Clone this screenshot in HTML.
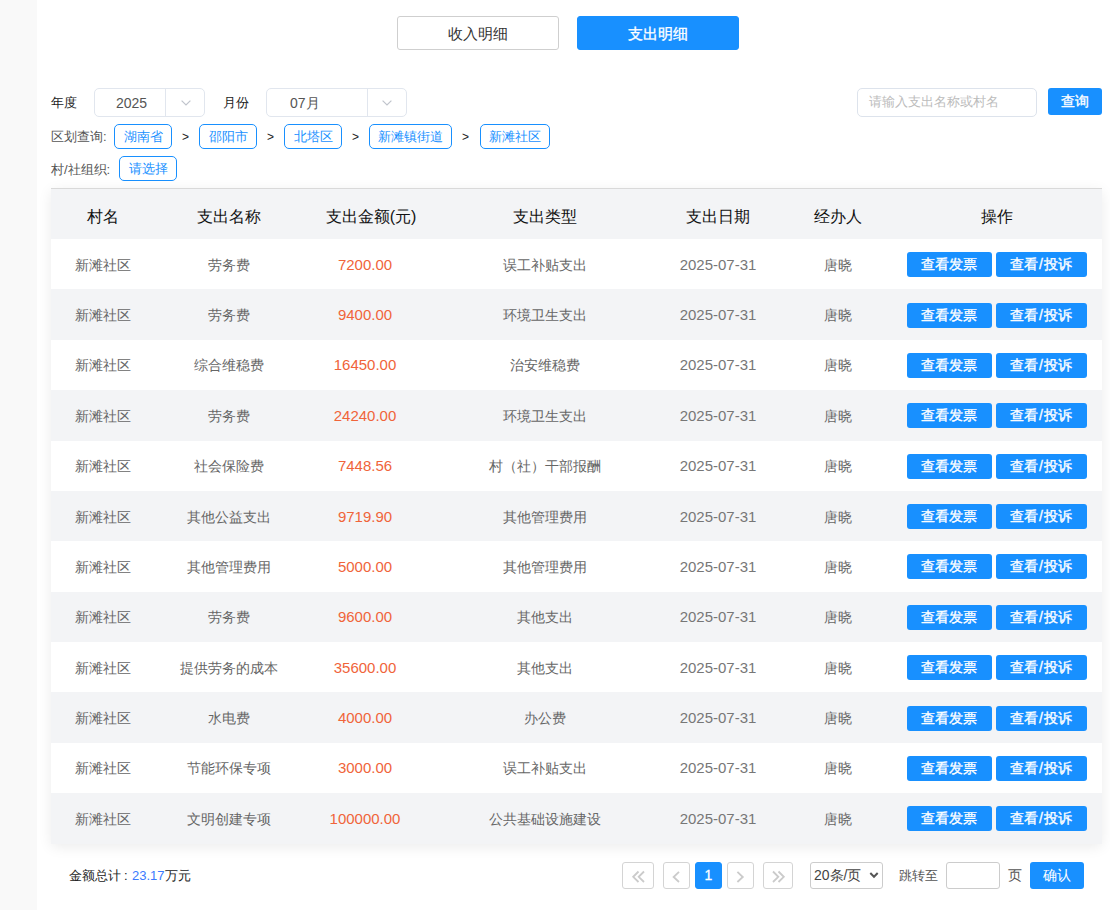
<!DOCTYPE html>
<html><head><meta charset="utf-8">
<style>
*{box-sizing:border-box;margin:0;padding:0}
html,body{width:1110px;height:910px;overflow:hidden;background:#fff;font-family:"Liberation Sans",sans-serif;color:#333}
.side{position:absolute;left:0;top:0;width:37px;height:910px;background:#f9f9f9}
.abs{position:absolute}
.tbtn{position:absolute;top:16px;height:34px;width:162px;border-radius:3px;font-size:14.5px;font-weight:500;text-align:center;line-height:34px}
.t1{left:397px;border:1px solid #cfcfcf;color:#333;background:#fff}
.t2{left:577px;border:1px solid #1890ff;background:#1890ff;color:#fff;font-weight:normal;-webkit-text-stroke:0.35px #fff}
.lbl{position:absolute;font-size:14px;color:#333;line-height:20px}
.sel{position:absolute;top:88px;height:29px;border:1px solid #e1e6ee;border-radius:5px;font-size:14px;color:#555}
.sel .v{position:absolute;top:1px;line-height:27px}
.sel .dv{position:absolute;top:0;bottom:0;width:1px;background:#e1e6ee}
.chev{position:absolute;top:10.8px;width:10px;height:6px}
.search{position:absolute;left:857px;top:88px;width:180px;height:29px;border:1px solid #dde3ec;border-radius:5px;font-size:14px;color:#bcbcbc;line-height:27px;padding-left:11px;font-size:12.6px}
.qbtn{position:absolute;left:1048px;top:88px;width:54px;height:27px;background:#1890ff;border-radius:3px;color:#fff;font-size:14px;font-weight:normal;-webkit-text-stroke:0.35px #fff;text-align:center;line-height:27px}
.tag{position:absolute;height:25px;border:1px solid #1890ff;border-radius:5px;color:#1890ff;font-size:13px;line-height:23px;text-align:center}
.gt{position:absolute;font-size:12px;color:#222;line-height:20px}
table{position:absolute;left:51px;top:188px;width:1051px;border-collapse:collapse;border-top:1px solid #d9d9d9;box-shadow:0 3px 14px rgba(0,0,0,.08);border-radius:0 0 4px 4px}
th{height:50.5px;padding-top:6px;background:#f3f4f6;font-weight:normal;font-size:16px;color:#111;text-align:center}
td{height:50.375px;font-size:14px;color:#666;text-align:center;padding:3px 0 0}
tr:nth-child(odd) td{background:#f3f4f6}
td.amt{color:#f0643a;font-size:15px;padding:0 12px 0 0}
td.dt{font-size:15px;padding:0;color:#777}
.b{display:inline-block;height:25px;line-height:25px;position:relative;top:-1px;background:#1890ff;color:#fff;border-radius:3px;font-size:14px;font-weight:normal;-webkit-text-stroke:0.35px #fff;vertical-align:middle}
.b1{width:85px}
.b2{width:91px;margin-left:4px}
.pg{position:absolute;top:862px;height:27px;border:1px solid #d4d4d4;border-radius:3px;color:#c0c4cc;text-align:center;line-height:25px;font-size:16px}
</style></head><body>
<div class="side"></div>
<div class="tbtn t1">收入明细</div>
<div class="tbtn t2">支出明细</div>

<div class="lbl" style="left:51px;top:93px;font-size:13px;color:#222">年度</div>
<div class="sel" style="left:94px;width:111px">
  <div class="v" style="left:1px;width:71px;text-align:center">2025</div>
  <div class="dv" style="left:70px"></div>
  <svg class="chev" style="left:85.7px" viewBox="0 0 10 6"><path d="M0.6 0.6 L5 5 L9.4 0.6" fill="none" stroke="#c0c4cc" stroke-width="1.2"/></svg>
</div>
<div class="lbl" style="left:223px;top:93px;font-size:13px;color:#222">月份</div>
<div class="sel" style="left:266px;width:141px">
  <div class="v" style="left:23px">07月</div>
  <div class="dv" style="left:99.5px"></div>
  <svg class="chev" style="left:114.7px" viewBox="0 0 10 6"><path d="M0.6 0.6 L5 5 L9.4 0.6" fill="none" stroke="#c0c4cc" stroke-width="1.2"/></svg>
</div>
<div class="search">请输入支出名称或村名</div>
<div class="qbtn">查询</div>

<div class="lbl" style="left:51px;top:127px;font-size:13px;color:#555">区划查询:</div>
<div class="tag" style="left:114px;top:124px;width:58px">湖南省</div>
<div class="gt" style="left:182px;top:126.5px">&gt;</div>
<div class="tag" style="left:199px;top:124px;width:58px">邵阳市</div>
<div class="gt" style="left:267px;top:126.5px">&gt;</div>
<div class="tag" style="left:284px;top:124px;width:58px">北塔区</div>
<div class="gt" style="left:352px;top:126.5px">&gt;</div>
<div class="tag" style="left:369px;top:124px;width:83px">新滩镇街道</div>
<div class="gt" style="left:462px;top:126.5px">&gt;</div>
<div class="tag" style="left:480px;top:124px;width:70px">新滩社区</div>

<div class="lbl" style="left:51px;top:159.5px;font-size:13px;color:#555">村/社组织:</div>
<div class="tag" style="left:119px;top:156px;width:58px">请选择</div>

<table>
<tr><th style="width:104px">村名</th><th style="width:148px">支出名称</th><th style="width:136px">支出金额(元)</th><th style="width:212px">支出类型</th><th style="width:134px">支出日期</th><th style="width:106px">经办人</th><th>操作</th></tr>
<tr><td>新滩社区</td><td>劳务费</td><td class="amt">7200.00</td><td>误工补贴支出</td><td class="dt">2025-07-31</td><td>唐晓</td><td><span class="b b1">查看发票</span><span class="b b2">查看<span style="margin:0 1px">/</span>投诉</span></td></tr>
<tr><td>新滩社区</td><td>劳务费</td><td class="amt">9400.00</td><td>环境卫生支出</td><td class="dt">2025-07-31</td><td>唐晓</td><td><span class="b b1">查看发票</span><span class="b b2">查看<span style="margin:0 1px">/</span>投诉</span></td></tr>
<tr><td>新滩社区</td><td>综合维稳费</td><td class="amt">16450.00</td><td>治安维稳费</td><td class="dt">2025-07-31</td><td>唐晓</td><td><span class="b b1">查看发票</span><span class="b b2">查看<span style="margin:0 1px">/</span>投诉</span></td></tr>
<tr><td>新滩社区</td><td>劳务费</td><td class="amt">24240.00</td><td>环境卫生支出</td><td class="dt">2025-07-31</td><td>唐晓</td><td><span class="b b1">查看发票</span><span class="b b2">查看<span style="margin:0 1px">/</span>投诉</span></td></tr>
<tr><td>新滩社区</td><td>社会保险费</td><td class="amt">7448.56</td><td>村（社）干部报酬</td><td class="dt">2025-07-31</td><td>唐晓</td><td><span class="b b1">查看发票</span><span class="b b2">查看<span style="margin:0 1px">/</span>投诉</span></td></tr>
<tr><td>新滩社区</td><td>其他公益支出</td><td class="amt">9719.90</td><td>其他管理费用</td><td class="dt">2025-07-31</td><td>唐晓</td><td><span class="b b1">查看发票</span><span class="b b2">查看<span style="margin:0 1px">/</span>投诉</span></td></tr>
<tr><td>新滩社区</td><td>其他管理费用</td><td class="amt">5000.00</td><td>其他管理费用</td><td class="dt">2025-07-31</td><td>唐晓</td><td><span class="b b1">查看发票</span><span class="b b2">查看<span style="margin:0 1px">/</span>投诉</span></td></tr>
<tr><td>新滩社区</td><td>劳务费</td><td class="amt">9600.00</td><td>其他支出</td><td class="dt">2025-07-31</td><td>唐晓</td><td><span class="b b1">查看发票</span><span class="b b2">查看<span style="margin:0 1px">/</span>投诉</span></td></tr>
<tr><td>新滩社区</td><td>提供劳务的成本</td><td class="amt">35600.00</td><td>其他支出</td><td class="dt">2025-07-31</td><td>唐晓</td><td><span class="b b1">查看发票</span><span class="b b2">查看<span style="margin:0 1px">/</span>投诉</span></td></tr>
<tr><td>新滩社区</td><td>水电费</td><td class="amt">4000.00</td><td>办公费</td><td class="dt">2025-07-31</td><td>唐晓</td><td><span class="b b1">查看发票</span><span class="b b2">查看<span style="margin:0 1px">/</span>投诉</span></td></tr>
<tr><td>新滩社区</td><td>节能环保专项</td><td class="amt">3000.00</td><td>误工补贴支出</td><td class="dt">2025-07-31</td><td>唐晓</td><td><span class="b b1">查看发票</span><span class="b b2">查看<span style="margin:0 1px">/</span>投诉</span></td></tr>
<tr><td>新滩社区</td><td>文明创建专项</td><td class="amt">100000.00</td><td>公共基础设施建设</td><td class="dt">2025-07-31</td><td>唐晓</td><td><span class="b b1">查看发票</span><span class="b b2">查看<span style="margin:0 1px">/</span>投诉</span></td></tr>
</table>

<div class="abs" style="left:69px;top:867px;font-size:13px;color:#222;line-height:18px">金额总计<span style="display:inline-block;width:11px;padding-left:3px">:</span><span style="color:#3a7afe">23.17</span>万元</div>

<div class="pg" style="left:622px;width:32px"></div>
<div class="pg" style="left:663px;width:27px"></div>
<div class="pg" style="left:695px;width:27px;background:#1890ff;border-color:#1890ff;color:#fff;font-size:14px;-webkit-text-stroke:0.3px #fff">1</div>
<div class="pg" style="left:727px;width:27px"></div>
<div class="pg" style="left:763px;width:30px"></div>
<svg class="abs" style="left:0;top:0" width="1110" height="910" viewBox="0 0 1110 910"><g fill="none" stroke="#cbcbcb" stroke-width="1.8">
<path d="M638.5 871.5 L633.2 876.8 L638.5 882"/><path d="M644 871.5 L638.7 876.8 L644 882"/>
<path d="M679 871.8 L673.6 877 L679 882"/>
<path d="M737.4 871.8 L742.8 877 L737.4 882"/>
<path d="M773 871.5 L778.3 876.8 L773 882"/><path d="M778.5 871.5 L783.8 876.8 L778.5 882"/>
</g>
<path d="M870.3 873 L874 876.8 L877.7 873" fill="none" stroke="#555" stroke-width="2"/>
</svg>
<div class="pg" style="left:810px;width:73px;color:#444;font-size:14px;text-align:left;padding-left:3px;border-color:#ccc;background:transparent">20条/页</div>
<div class="lbl" style="left:899px;top:866px;color:#555;font-size:13px">跳转至</div>
<div class="pg" style="left:946px;width:54px;border-color:#ccc"></div>
<div class="lbl" style="left:1008px;top:865px;color:#555">页</div>
<div class="qbtn" style="left:1030px;top:862px;height:27px;-webkit-text-stroke:0 #fff">确认</div>
</body></html>
